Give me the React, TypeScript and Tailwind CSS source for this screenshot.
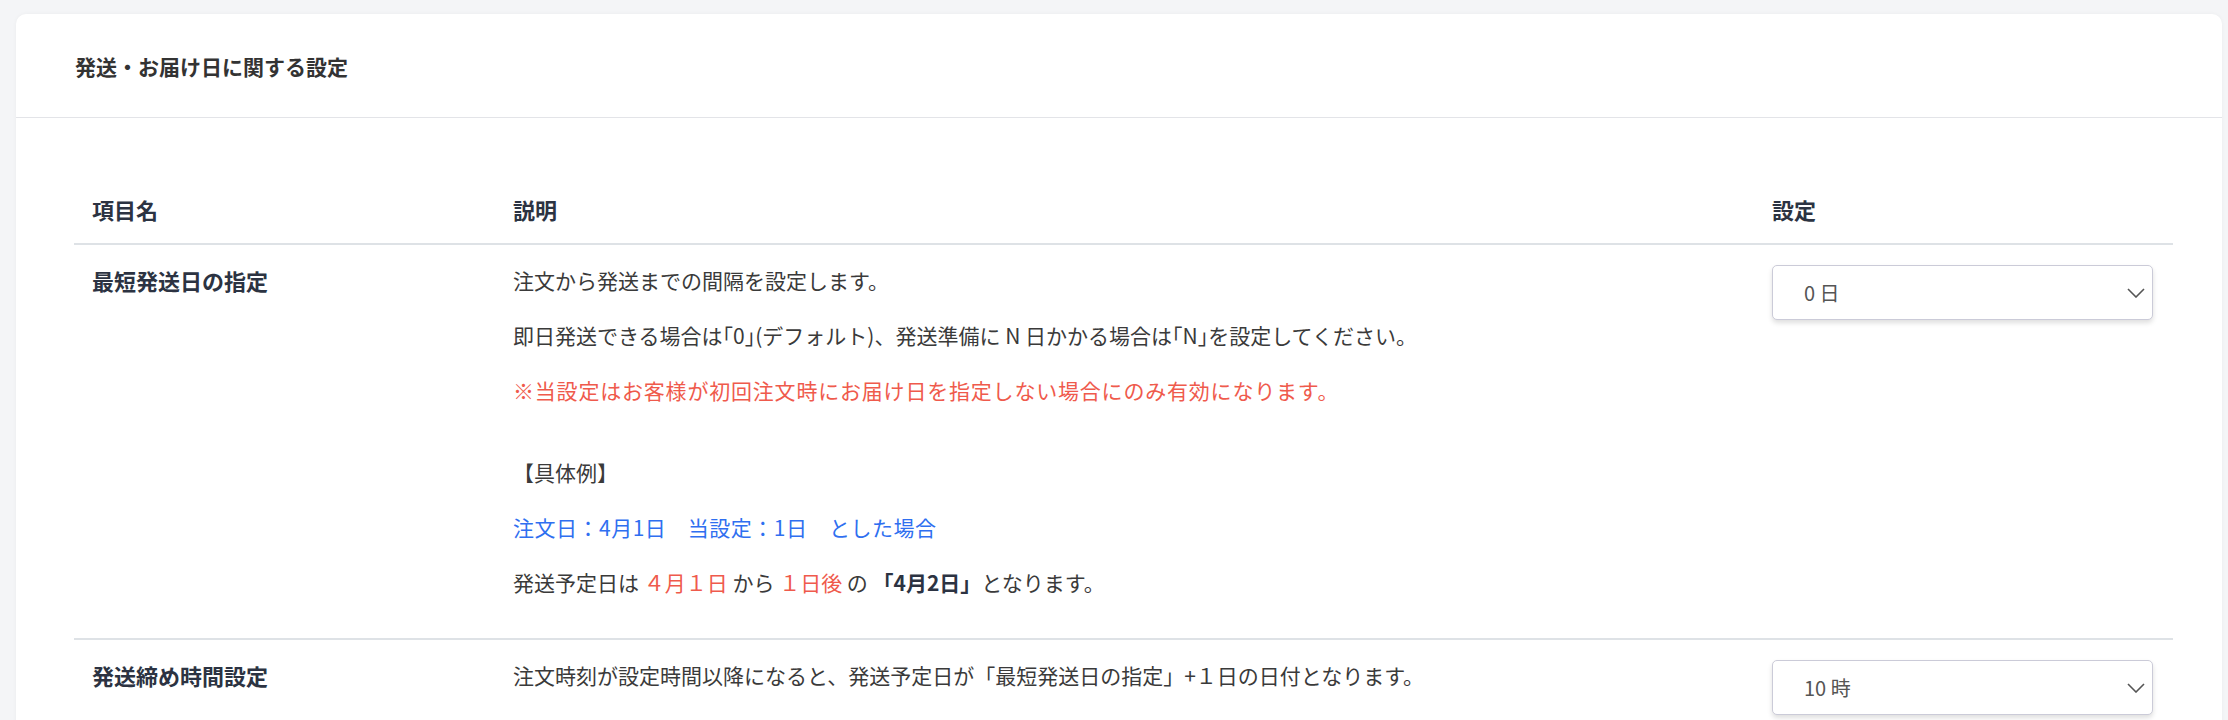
const font = { fontFamily: '"Noto Sans CJK JP", "Noto Sans", sans-serif' }

function Chevron() {
  return (
    <svg width="18" height="10" viewBox="0 0 18 10" fill="none">
      <polyline points="1,1 9,9 17,1" stroke="#555" strokeWidth="1.6" />
    </svg>
  )
}

function SelectBox({ value }: { value: string }) {
  return (
    <div className="flex h-[55px] w-[381px] items-center justify-between rounded-[5px] border border-[#cbcbd8] bg-white pl-[31px] pr-[7px] text-[20px] text-[#555] shadow-[0_3px_5px_rgba(0,0,0,0.13)]">
      <span>{value}</span>
      <Chevron />
    </div>
  )
}

export default function App() {
  return (
    <div className="min-h-[720px] bg-[#f4f5f7] pl-4 pr-[6px] pt-[14px]" style={font}>
      <div className="rounded-t-[10px] bg-white shadow-[0_0_4px_rgba(0,0,0,0.04)]">
        <div className="flex h-[104px] items-center border-b border-[#e3e4e8] px-[59px]">
          <h1 className="text-[21px] font-bold leading-[30px] text-[#333]">発送・お届け日に関する設定</h1>
        </div>

        <div className="pb-10 pl-[58px] pr-[49px] pt-[56px]">
          <div className="grid grid-cols-[421px_1259px_1fr] text-[21px] leading-[30px]">
            {/* header */}
            <div className="border-b-2 border-[#dee2e6] px-[18px] pb-[19px] pt-5 text-[22px] font-bold text-[#2c3342]">項目名</div>
            <div className="border-b-2 border-[#dee2e6] px-[18px] pb-[19px] pt-5 text-[22px] font-bold text-[#2c3342]">説明</div>
            <div className="border-b-2 border-[#dee2e6] px-[18px] pb-[19px] pt-5 text-[22px] font-bold text-[#2c3342]">設定</div>

            {/* row 1 */}
            <div className="border-b-2 border-[#dee2e6] px-[18px] pb-4 pt-5 text-[22px] font-bold text-[#2c3342]">最短発送日の指定</div>
            <div className="border-b-2 border-[#dee2e6] px-[18px] pb-4 pt-5 text-[#3a3a3a]">
              <p className="mb-[25px]">注文から発送までの間隔を設定します。</p>
              <p className="mb-[25px]">即日発送できる場合は｢0｣(デフォルト)、発送準備に N 日かかる場合は｢N｣を設定してください。</p>
              <p className="mb-[52px] tracking-[0.8px] text-[#ef5a4c]">※当設定はお客様が初回注文時にお届け日を指定しない場合にのみ有効になります。</p>
              <p className="mb-[25px]">【具体例】</p>
              <p className="mb-[25px] tracking-[0.5px] text-[#2f6ff0]">注文日：4月1日　当設定：1日　とした場合</p>
              <p className="mb-[25px]">
                発送予定日は <span className="text-[#ef5a4c]">４月１日</span> から{' '}
                <span className="text-[#ef5a4c]">１日後</span> の <strong className="text-[#2c3342]">「4月2日」</strong>となります。
              </p>
            </div>
            <div className="border-b-2 border-[#dee2e6] px-[18px] pb-4 pt-5">
              <SelectBox value="0 日" />
            </div>

            {/* row 2 */}
            <div className="px-[18px] pb-4 pt-5 text-[22px] font-bold text-[#2c3342]">発送締め時間設定</div>
            <div className="px-[18px] pb-4 pt-5 text-[#3a3a3a]">
              <p className="mb-[25px]">注文時刻が設定時間以降になると、発送予定日が「最短発送日の指定」+１日の日付となります。</p>
            </div>
            <div className="px-[18px] pb-4 pt-5">
              <SelectBox value="10 時" />
            </div>
          </div>
        </div>
      </div>
    </div>
  )
}
